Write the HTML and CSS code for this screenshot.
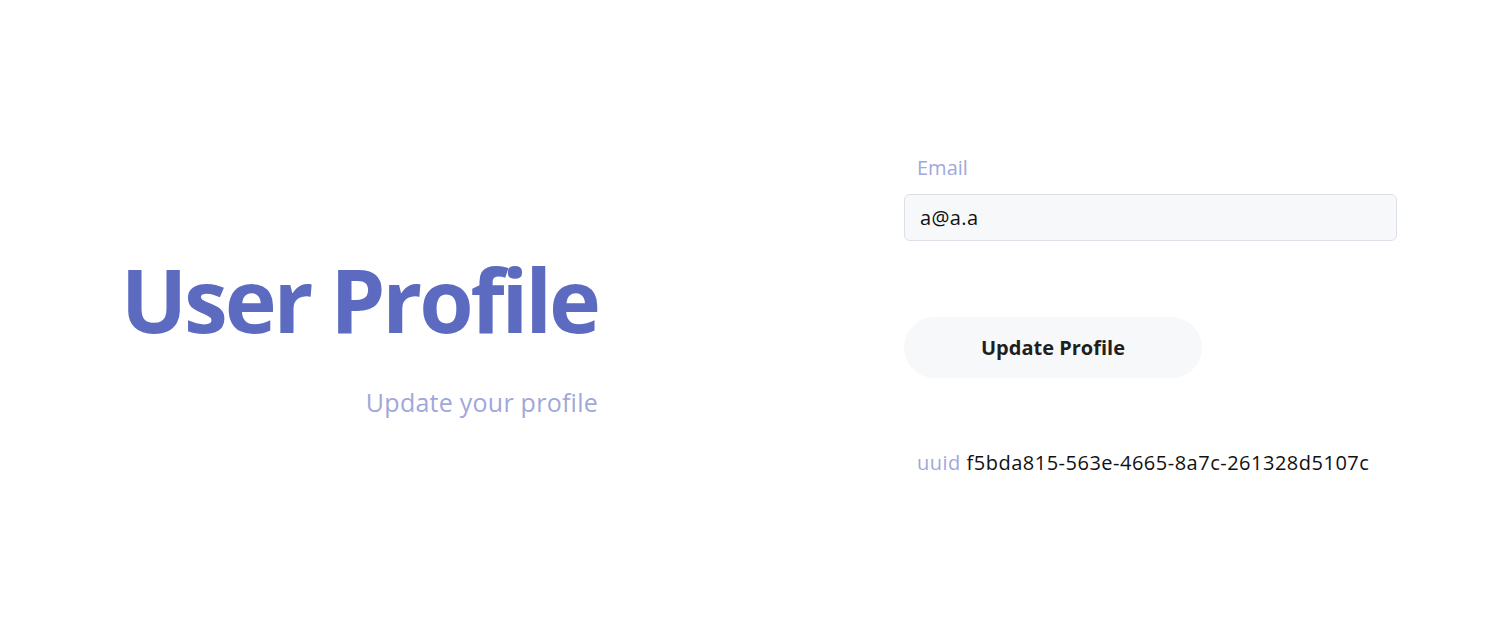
FILE: index.html
```html
<!DOCTYPE html>
<html lang="en">
<head>
<meta charset="utf-8">
<title>User Profile</title>
<link rel="stylesheet" href="styles.css">
</head>
<body>
<main class="page">
  <section class="intro">
    <h1 class="title">User Profile</h1>
    <p class="subtitle">Update your profile</p>
  </section>
  <section class="panel">
    <form class="form">
      <label class="label" for="email">Email</label>
      <input class="input" id="email" type="email" value="a@a.a">
      <button class="button" type="button">Update Profile</button>
    </form>
    <p class="uuid"><span class="uuid-key">uuid</span> f5bda815-563e-4665-8a7c-261328d5107c</p>
  </section>
</main>
</body>
</html>
```

FILE: styles.css
```css
* { box-sizing: border-box; }
html, body { margin: 0; padding: 0; background: #ffffff; }
body {
  font-family: "Open Sans", "Noto Sans", sans-serif;
  color: #111111;
}
.page {
  height: 641px;
  display: grid;
  grid-template-columns: 756px 1fr;
  align-items: center;
}
.intro {
  display: flex;
  flex-direction: column;
  align-items: flex-end;
  padding-right: 158px;
  padding-top: 28px;
}
.title {
  margin: 0;
  font-size: 88px;
  font-weight: 700;
  line-height: 1.1;
  color: #5c6bc0;
  letter-spacing: -3.1px;
}
.subtitle {
  margin: 38px 0 0;
  font-size: 25px;
  line-height: 1.3;
  letter-spacing: 0.25px;
  color: #9fa8da;
}
.panel {
  padding-left: 148px;
  padding-right: 115px;
  padding-bottom: 10px;
  display: flex;
  flex-direction: column;
}
.form {
  display: flex;
  flex-direction: column;
  align-items: flex-start;
}
.label {
  padding-left: 13px;
  font-size: 20px;
  line-height: 26px;
  color: #9fa8da;
  margin-bottom: 13px;
}
.input {
  width: 100%;
  height: 47px;
  padding: 0 15px;
  font-family: inherit;
  font-size: 20px;
  letter-spacing: 0.4px;
  color: #111111;
  background: #f7f8fa;
  border: 1px solid #dde0e6;
  border-radius: 6px;
  outline: none;
}
.button {
  margin-top: 76px;
  width: 298px;
  height: 61px;
  border: none;
  border-radius: 31px;
  background: #f7f8fa;
  font-family: inherit;
  font-size: 20px;
  font-weight: 700;
  color: #1f1f1f;
}
.uuid {
  margin: 72px 0 0;
  padding-left: 13px;
  font-size: 20px;
  line-height: 26px;
  letter-spacing: 0.5px;
  color: #111111;
}
.uuid-key { color: #9fa8da; }
```
